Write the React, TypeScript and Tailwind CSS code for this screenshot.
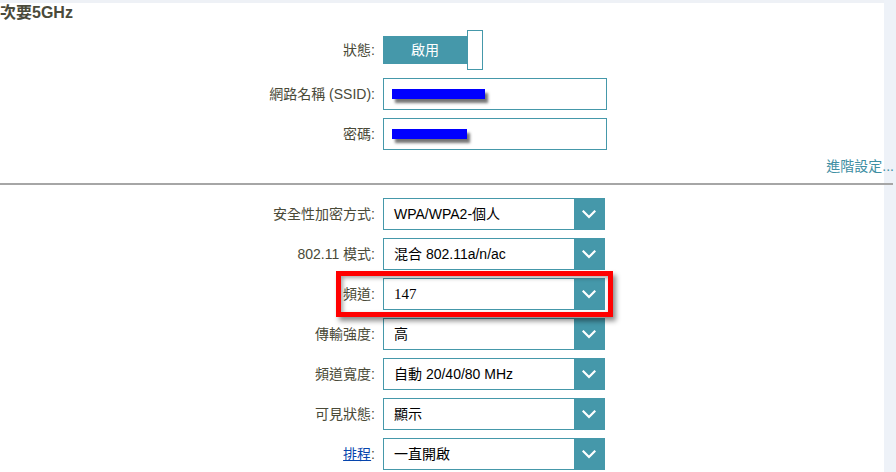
import { ReactNode } from "react";

const cjk = "font-[family-name:'Liberation_Sans','Noto_Sans_CJK_TC',sans-serif]";

function Label({ children }: { children: ReactNode }) {
  return <div className="w-[376px] shrink-0 pr-[1px] text-right text-[14px] text-[#4a4a38]">{children}</div>;
}

function Chevron() {
  return (
    <svg width="14" height="9" viewBox="0 0 14 9" fill="none">
      <path d="M1.5 1.5 L7 7 L12.5 1.5" stroke="white" strokeWidth="2.2" strokeLinecap="square" />
    </svg>
  );
}

function Select({ value, serif }: { value: string; serif?: boolean }) {
  return (
    <div className="ml-[7px] flex h-[32px] w-[222px] border border-[#4598aa] bg-white">
      <div
        className={
          serif
            ? "flex flex-1 items-center pl-[10px] font-['Liberation_Serif','Times_New_Roman',serif] text-[15px] text-black"
            : "flex flex-1 items-center pl-[10px] text-[14px] text-black"
        }
      >
        {value}
      </div>
      <div className="flex w-[30px] items-center justify-center bg-[#4598aa]">
        <Chevron />
      </div>
    </div>
  );
}

function Row({ label, value, serif }: { label: ReactNode; value: string; serif?: boolean }) {
  return (
    <div className="flex h-[32px] shrink-0 items-center">
      <Label>{label}</Label>
      <Select value={value} serif={serif} />
    </div>
  );
}

function Scribble({ w }: { w: number }) {
  return (
    <div className="flex h-[30px] items-center pl-[8px]">
      <div
        className="h-[10px] bg-[#0000ff] shadow-[3px_4px_3px_rgba(0,0,0,0.55)]"
        style={{ width: w }}
      />
    </div>
  );
}

export default function App() {
  return (
    <div className={`flex h-[472px] w-[896px] overflow-hidden bg-white ${cjk}`}>
      <div className="flex w-[884px] shrink-0 flex-col border-t-[3px] border-[#eef1f6]">
        <div className="shrink-0 pt-[1px] text-[16px] leading-[18px] font-bold text-[#4a4a3a]">次要5GHz</div>

        {/* status toggle */}
        <div className="mt-[8px] flex h-[40px] shrink-0 items-center">
          <Label>狀態:</Label>
          <div className="ml-[7px] flex items-center">
            <div className="flex h-[28px] w-[84px] items-center justify-center bg-[#4598aa] text-[14px] text-white">
              啟用
            </div>
            <div className="h-[40px] w-[16px] border border-[#4598aa] bg-white" />
          </div>
        </div>

        <div className="mt-[8px] flex h-[32px] shrink-0 items-center">
          <Label>網路名稱 (SSID):</Label>
          <div className="ml-[7px] h-[32px] w-[224px] border border-[#4598aa]">
            <Scribble w={93} />
          </div>
        </div>

        <div className="mt-[8px] flex h-[32px] shrink-0 items-center">
          <Label>密碼:</Label>
          <div className="ml-[7px] h-[32px] w-[224px] border border-[#4598aa]">
            <Scribble w={75} />
          </div>
        </div>

        <div className="relative z-10 mt-[6px] flex h-[20px] shrink-0 justify-end">
          <span className="-mr-[10px] whitespace-nowrap text-[14px] text-[#3f8fa3]">進階設定...</span>
        </div>

        <div className="relative z-10 mt-[7px] h-[2px] w-[893px] shrink-0 bg-[#a6a6a6]" />

        <div className="mt-[13px] flex shrink-0 flex-col gap-[8px]">
          <Row label="安全性加密方式:" value="WPA/WPA2-個人" />
          <Row label="802.11 模式:" value="混合 802.11a/n/ac" />
          <div className="relative">
            <Row label="頻道:" value="147" serif />
            <span className="pointer-events-none absolute top-[-7px] left-[336px] h-[46px] w-[277px] border-[5px] border-[#ff0000] shadow-[3px_4px_5px_rgba(0,0,0,0.45),inset_2px_2px_4px_rgba(0,0,0,0.35)]" />
          </div>
          <Row label="傳輸強度:" value="高" />
          <Row label="頻道寬度:" value="自動 20/40/80 MHz" />
          <Row label="可見狀態:" value="顯示" />
          <Row
            label={
              <>
                <span className="text-[#0645ad] underline">排程</span>:
              </>
            }
            value="一直開啟"
          />
        </div>
      </div>
      <div className="w-[12px] shrink-0 bg-[#eef2f8]" />
    </div>
  );
}
